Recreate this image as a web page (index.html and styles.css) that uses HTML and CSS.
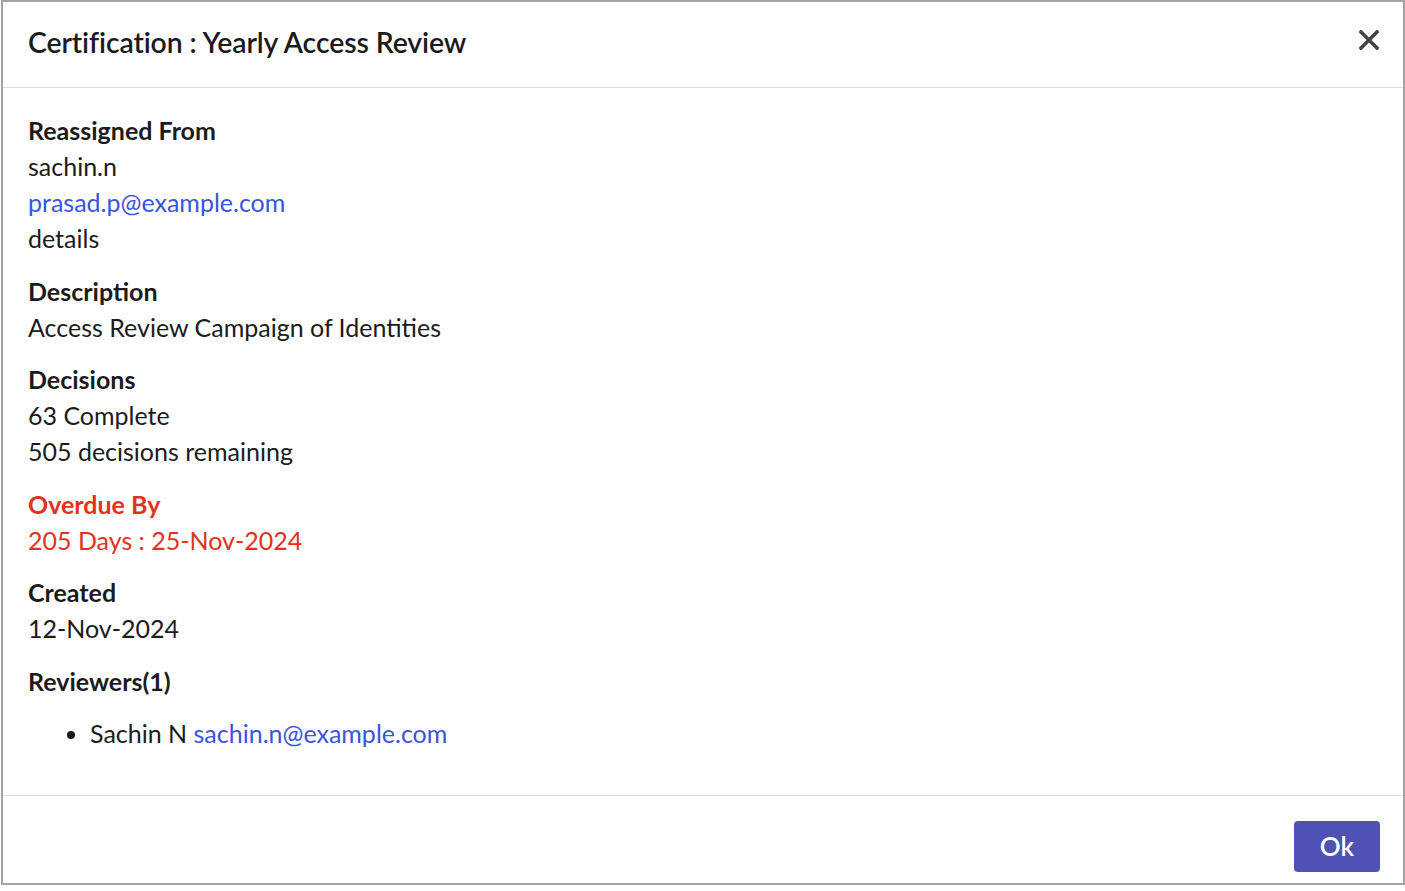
FILE: index.html
```html
<!DOCTYPE html>
<html>
<head>
  <meta charset="utf-8">
  <link rel="stylesheet" href="styles.css">
</head>
<body>

  <div class="modal">
    <div class="modal-header">
      <h1 class="modal-title">Certification : Yearly Access Review</h1>
      <button class="close" aria-label="Close">
        <svg width="20" height="20" viewBox="0 0 20 20">
          <path d="M2 2 L18 18 M18 2 L2 18" stroke="#444" stroke-width="3.6" stroke-linecap="square"/>
        </svg>
      </button>
    </div>

    <div class="modal-body">
      <div class="field">
        <div class="label">Reassigned From</div>
        <div>sachin.n</div>
        <div><a href="#">prasad.p@example.com</a></div>
        <div>details</div>
      </div>

      <div class="field">
        <div class="label">Description</div>
        <div>Access Review Campaign of Identities</div>
      </div>

      <div class="field">
        <div class="label">Decisions</div>
        <div>63 Complete</div>
        <div>505 decisions remaining</div>
      </div>

      <div class="field overdue">
        <div class="label">Overdue By</div>
        <div>205 Days : 25-Nov-2024</div>
      </div>

      <div class="field">
        <div class="label">Created</div>
        <div>12-Nov-2024</div>
      </div>

      <div class="field">
        <div class="label">Reviewers(1)</div>
        <ul class="reviewers">
          <li>Sachin N <a href="#">sachin.n@example.com</a></li>
        </ul>
      </div>
    </div>

    <div class="modal-footer">
      <button class="btn-ok">Ok</button>
    </div>
  </div>

</body>
</html>
```

FILE: styles.css
```css
body {
  margin: 0;
  background: white;
  color: #1b1b1d;
  font-family: Lato, "Open Sans", sans-serif;
}
.modal {
  box-sizing: border-box;
  width: 1404px;
  height: 885px;
  margin-left: 1px;
  border: 2px solid #a3a3a3;
  display: flex;
  flex-direction: column;
}
.modal-header {
  height: 85px;
  display: flex;
  align-items: center;
  justify-content: space-between;
  padding: 0 24px 0 25px;
  border-bottom: 1px solid #dcdcdc;
}
.modal-title {
  margin: 0 0 6px;
  font-size: 28.4px;
  font-weight: 600;
  letter-spacing: -0.1px;
}
.close {
  border: none;
  background: none;
  padding: 0;
  margin-top: -10px;
  display: flex;
}
.modal-body {
  flex: 1;
  padding: 24px 25px 0;
  font-size: 25px;
  line-height: 36px;
}
.field {
  margin-bottom: 16.6px;
}
.label {
  font-weight: 700;
}
.overdue {
  color: #e2321f;
}
a {
  color: #3a55db;
  text-decoration: none;
}
.reviewers {
  margin: 16px 0 0;
  padding-left: 62px;
}
.modal-footer {
  height: 88px;
  box-sizing: border-box;
  border-top: 1px solid #dcdcdc;
  display: flex;
  justify-content: flex-end;
  align-items: flex-start;
  padding: 25px 23px 0 0;
}
.btn-ok {
  width: 86px;
  height: 51px;
  border: none;
  border-radius: 4px;
  background: #4f51b4;
  color: white;
  font-family: Lato, sans-serif;
  font-size: 26px;
  font-weight: 600;
  padding-bottom: 3px;
}
```
